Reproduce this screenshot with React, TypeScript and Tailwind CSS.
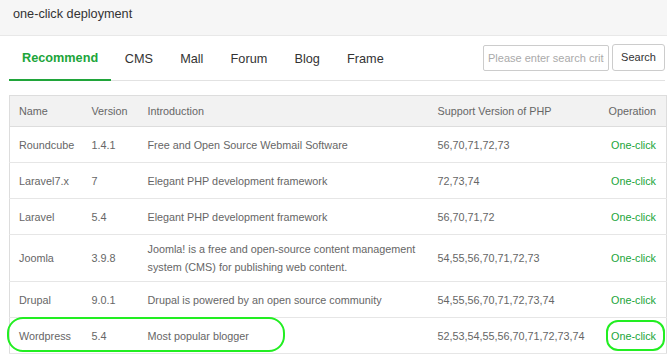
import { useState } from "react";

interface Soft {
  name: string;
  version: string;
  intro: string;
  php: string;
}

const TABS = ["Recommend", "CMS", "Mall", "Forum", "Blog", "Frame"];

const ROWS: Soft[] = [
  { name: "Roundcube", version: "1.4.1", intro: "Free and Open Source Webmail Software", php: "56,70,71,72,73" },
  { name: "Laravel7.x", version: "7", intro: "Elegant PHP development framework", php: "72,73,74" },
  { name: "Laravel", version: "5.4", intro: "Elegant PHP development framework", php: "56,70,71,72" },
  {
    name: "Joomla",
    version: "3.9.8",
    intro: "Joomla! is a free and open-source content management system (CMS) for publishing web content.",
    php: "54,55,56,70,71,72,73",
  },
  { name: "Drupal", version: "9.0.1", intro: "Drupal is powered by an open source community", php: "54,55,56,70,71,72,73,74" },
  { name: "Wordpress", version: "5.4", intro: "Most popular blogger", php: "52,53,54,55,56,70,71,72,73,74" },
];

export default function App() {
  const [active, setActive] = useState(0);
  const [query, setQuery] = useState("");

  return (
    <div
      className="relative w-[667px] h-[358px] overflow-hidden bg-white text-[#666]"
      style={{ fontFamily: '"Liberation Sans", Arial, sans-serif' }}
    >
      {/* Title bar */}
      <div className="h-[36px] bg-[#f6f6f6] border-b border-[#e8e8e8] pl-[13px] flex items-center">
        <span className="text-[12.7px] text-[#333] -mt-[6px]">one-click deployment</span>
      </div>

      <div className="pl-[9px] pr-[2px]">
        {/* Tabs + search */}
        <div className="flex items-stretch h-[45px] border-b border-[#e2e2e2]">
          {TABS.map((t, i) => (
            <button
              key={t}
              onClick={() => setActive(i)}
              className={
                i === active
                  ? "px-[13px] text-[12.7px] font-bold text-[#20a53a] border-b-2 border-[#20a53a] -mb-px pt-[3px]"
                  : "px-[13.6px] text-[12.7px] text-[#333] pt-[3px]"
              }
            >
              {t}
            </button>
          ))}
          <div className="ml-auto flex items-center gap-[3px] pb-[1px]">
            <input
              value={query}
              onChange={(e) => setQuery(e.target.value)}
              placeholder="Please enter search criteria"
              className="w-[126px] h-[26px] border border-[#ccc] rounded-[2px] px-[4px] text-[11px] text-[#333] placeholder:text-[#aaa] outline-none"
            />
            <button className="w-[53px] h-[27px] border border-[#ccc] rounded-[3px] bg-white text-[11px] text-[#333]">
              Search
            </button>
          </div>
        </div>

        {/* Table */}
        <table className="mt-[14px] w-[657px] table-fixed border-collapse border border-[#ddd] text-[10.8px]">
          <colgroup>
            <col className="w-[73px]" />
            <col className="w-[56px]" />
            <col className="w-[290px]" />
            <col className="w-[168px]" />
            <col className="w-[70px]" />
          </colgroup>
          <thead>
            <tr className="h-[31px] bg-[#f2f2f2] border-b border-[#ddd]">
              <th className="pl-[9px] pr-[10px] text-left font-normal">Name</th>
              <th className="pl-[9px] pr-[10px] text-left font-normal">Version</th>
              <th className="pl-[9px] pr-[6px] text-left font-normal">Introduction</th>
              <th className="pl-[9px] pr-[10px] text-left font-normal">Support Version of PHP</th>
              <th className="pl-[9px] pr-[10px] text-right font-normal">Operation</th>
            </tr>
          </thead>
          <tbody>
            {ROWS.map((r) => (
              <tr key={r.name} className="h-[36px] border-b border-[#e6e6e6]">
                <td className="pl-[9px] pr-[10px] py-[5px] leading-[18px]">{r.name}</td>
                <td className="pl-[9px] pr-[10px] py-[5px] leading-[18px]">{r.version}</td>
                <td className="pl-[9px] pr-[6px] py-[5px] leading-[18px]">{r.intro}</td>
                <td className="pl-[9px] pr-[10px] py-[5px] leading-[18px]">{r.php}</td>
                <td className="pl-[9px] pr-[10px] py-[5px] leading-[18px] text-right">
                  <a className="text-[#20a53a] cursor-pointer">One-click</a>
                </td>
              </tr>
            ))}
          </tbody>
        </table>
      </div>

      {/* Highlight annotations */}
      <div className="absolute left-[7px] top-[317px] w-[278px] h-[35px] rounded-[16px] border-2 border-[#22ee22] pointer-events-none" />
      <div className="absolute left-[606px] top-[320px] w-[59px] h-[31px] rounded-[12px] border-2 border-[#22ee22] pointer-events-none" />
    </div>
  );
}
